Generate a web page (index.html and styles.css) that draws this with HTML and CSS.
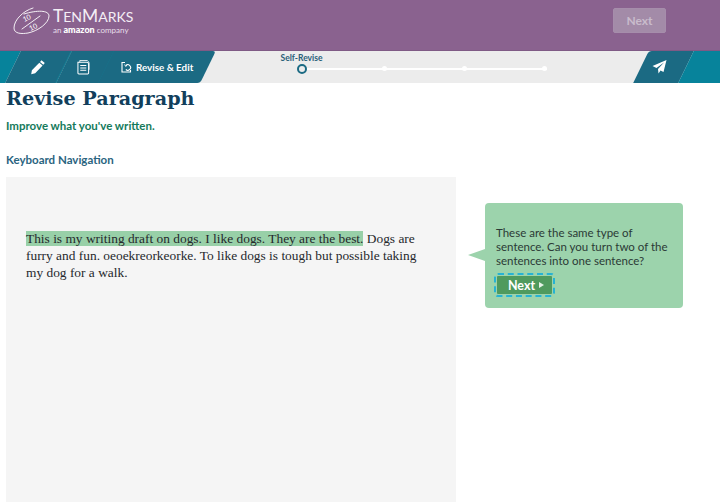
FILE: index.html
```html
<!DOCTYPE html>
<html lang="en">
<head>
<meta charset="utf-8">
<title>Revise Paragraph</title>
<link rel="stylesheet" href="styles.css">
</head>
<body>
<header class="topbar">
  <div class="logo">
    <svg class="logo-mark" width="37" height="28" viewBox="0 0 37 28" fill="none" stroke="#fff" stroke-width=".9" stroke-linecap="round">
      <path d="M20 1C10 4 1 13 1 21c0 6 8 6 14 5C25 24 36 16 36 9 36 3 24 3 11 7"/>
      <path d="M9 22 27 9"/>
      <text class="logo-num" x="10" y="14" transform="rotate(-25 13 12)">10</text>
      <text class="logo-num" x="16" y="23" transform="rotate(-25 19 20)">10</text>
    </svg>
    <div class="logo-text">
      <div class="logo-name">T<span class="logo-small">EN</span>M<span class="logo-small">ARKS</span></div>
      <div class="logo-sub">an <b>amazon</b> company</div>
    </div>
  </div>
  <button class="top-next">Next</button>
</header>
<nav class="navbar">
  <div class="tabs">
    <div class="tab tab-lead"></div>
    <div class="tab tab-pencil">
      <svg class="tab-icon" width="16" height="16" viewBox="0 0 16 16" fill="#fff"><path d="M11.500 1.200 14.800 4 13.300 5.800 10 3ZM9.300 3.800 12.600 6.600 5.200 14.200 1.200 15.300 1.900 11.300Z"/></svg>
    </div>
    <div class="tab tab-doc">
      <svg class="tab-icon" width="13" height="16" viewBox="0 0 14 16" fill="none" stroke="#fff" stroke-width="1.100"><path d="M1 3h9.500a2 2 0 0 1 2 2v9.500a1 1 0 0 1-1 1H2a1 1 0 0 1-1-1Z"/><path d="M3 3V1h8l2 2v8" stroke-width=".9"/><path d="M3.500 6.500h6.500M3.500 9h6.500M3.500 11.500h6.500"/></svg>
    </div>
    <div class="tab tab-active">
      <span class="tab-inner">
        <svg class="tab-icon" width="11" height="12" viewBox="0 0 11 12" fill="none" stroke="#fff" stroke-width="1.100"><path d="M4 1.500H1v9.500h8.500V9"/><path d="M4.800 4.500a2.800 2.800 0 1 1 0 4"/><path d="M3.600 3.500l1.200 2 1.500-1.800" stroke-width=".9"/></svg>
        Revise &amp; Edit
      </span>
    </div>
  </div>
  <div class="stepper">
    <div class="step-label">Self-Revise</div>
    <div class="step-track">
      <span class="step-ring"></span>
      <span class="step-dot"></span>
      <span class="step-dot"></span>
      <span class="step-dot"></span>
    </div>
  </div>
  <div class="tabs-right">
    <div class="tab tab-send">
      <svg class="tab-icon" width="15" height="14" viewBox="0 0 15 14" fill="#fff"><path d="M14.500 0 0.500 6 4.500 8 12 2.500 6 9 6.500 13.500 8.500 10.500 11.500 12Z"/></svg>
    </div>
    <div class="tab tab-tail"></div>
  </div>
</nav>
<main class="page">
  <h1 class="title">Revise Paragraph</h1>
  <p class="subtitle">Improve what you've written.</p>
  <p class="kbd">Keyboard Navigation</p>
  <div class="work">
    <section class="draft">
      <p class="draft-text"><mark class="hl">This is my writing draft on dogs. I like dogs. They are the best.</mark> Dogs are furry and fun. oeoekreorkeorke. To like dogs is tough but possible taking my dog for a walk.</p>
    </section>
    <aside class="callout">
      <p class="callout-text">These are the same type of sentence. Can you turn two of the sentences into one sentence?</p>
      <button class="callout-next">Next <span class="caret"></span></button>
    </aside>
  </div>
</main>
</body>
</html>
```
FILE: styles.css
```css
* { box-sizing: border-box; }
html, body { margin: 0; padding: 0; }
body { width: 720px; height: 502px; overflow: hidden; background: #fff; font-family: "Lato", "Liberation Sans", sans-serif; }

.topbar { height: 51px; background: #8a628f; border-bottom: 1px solid #7f5a85; display: flex; align-items: flex-start; justify-content: space-between; padding: 8px 54px 0 13px; }
.logo { display: flex; align-items: flex-start; gap: 3px; }
.logo-mark { display: block; margin-top: -1px; }
.logo-num { font: 7px "Lato", sans-serif; fill: #fff; stroke: none; }
.logo-text { color: #fff; }
.logo-name { font-size: 17.400px; line-height: 16px; color: #f4eef5; }
.logo-small { font-size: 14px; }
.logo-sub { font-size: 8px; line-height: 10px; color: #e8dfea; }
.logo-sub b { font-weight: 900; font-size: 9px; color: #fff; }
.top-next { width: 53px; height: 25px; border: 1px solid #a68dab; border-radius: 2px; background: #a38ba8; color: #c9bccc; font: 700 12px "Lato", sans-serif; padding: 0; }

.navbar { height: 32px; background: #ececec; display: flex; overflow: hidden; position: relative; }
.tabs { display: flex; margin-left: -20px; width: 227.500px; flex: none; }
.tab { height: 32px; transform: skewX(-26deg); display: flex; align-items: center; justify-content: center; flex: none; }
.tab > * { transform: skewX(26deg); }
.tab-lead { width: 33px; background: #07839b; }
.tab-pencil { width: 50.500px; background: #1b6a83; border-right: 1px solid #148097; }
.tab-doc { width: 42.500px; background: #1b6a83; border-right: 1px solid #148097; padding-right: 2px; }
.tab-active { width: 101.500px; background: #1b6a83; border-radius: 0 3px 3px 0; }
.tab-inner { display: flex; align-items: center; gap: 4px; color: #fff; font-size: 9.800px; font-weight: 700; white-space: nowrap; padding-left: 1px; }
.tab-icon { display: block; flex: none; }

.stepper { margin-left: 72px; width: 254px; flex: none; display: flex; flex-direction: column; padding-top: 2px; }
.step-label { font-size: 8.500px; font-weight: 700; color: #2a6078; line-height: 10px; padding-left: 1px; }
.step-track { display: flex; justify-content: space-between; align-items: center; width: 250px; margin-left: 17px; height: 11px; background: linear-gradient(#fff, #fff) center / 100% 2px no-repeat; }
.step-ring { width: 10px; height: 10px; border: 2px solid #1b6a83; border-radius: 50%; background: #ececec; }
.step-dot { width: 5px; height: 5px; border-radius: 50%; background: #fff; }
.tabs-right { display: flex; margin-left: auto; width: 89px; flex: none; margin-right: -10px; }
.tab-send { width: 45px; background: #1b6a83; border-radius: 3px 0 0 0; padding-right: 8px; }
.tab-tail { width: 60px; background: #07839b; }

.page { padding: 0 0 0 6px; }
.title { margin: 0; font: 700 19.200px/30px "DejaVu Serif", serif; color: #123f5c; padding-top: 1px; }
.subtitle { margin: 0; padding-top: 4px; font-size: 11.500px; line-height: 15px; font-weight: 700; color: #147a5b; }
.kbd { margin: 0; padding-top: 19px; font-size: 11.500px; line-height: 15px; font-weight: 700; color: #2a6480; }
.work { display: flex; margin-top: 10px; }
.draft { width: 450px; height: 325px; background: #f5f5f5; padding: 53px 20px 0; flex: none; }
.draft-text { margin: 0; font: 13.400px/17px "Liberation Serif", serif; color: #25282c; }
.hl { background: #98d0a8; color: inherit; }
.callout { position: relative; width: 198px; height: 105px; margin: 26px 0 0 29px; background: #9cd3ac; border-radius: 4px; padding: 23px 6px 0 11px; }
.callout::before { content: ""; position: absolute; left: -17px; top: 46px; border-style: solid; border-width: 6px 17px 6px 0; border-color: transparent #9cd3ac transparent transparent; }
.callout-text { margin: 0; font-size: 11.500px; line-height: 14px; color: #2b3a36; }
.callout-next { display: flex; align-items: center; justify-content: center; gap: 4px; width: 55px; height: 18px; margin: 8px 0 0 1px; border: 0; border-radius: 1px; background: #4f9a5e; color: #fff; font: 700 12.500px "Lato", sans-serif; padding: 0 0 0 3px; outline: 2px dashed #27b3d3; outline-offset: 1px; }
.caret { width: 0; height: 0; border-style: solid; border-width: 3.500px 0 3.500px 5px; border-color: transparent transparent transparent #e4f2e7; }
```
